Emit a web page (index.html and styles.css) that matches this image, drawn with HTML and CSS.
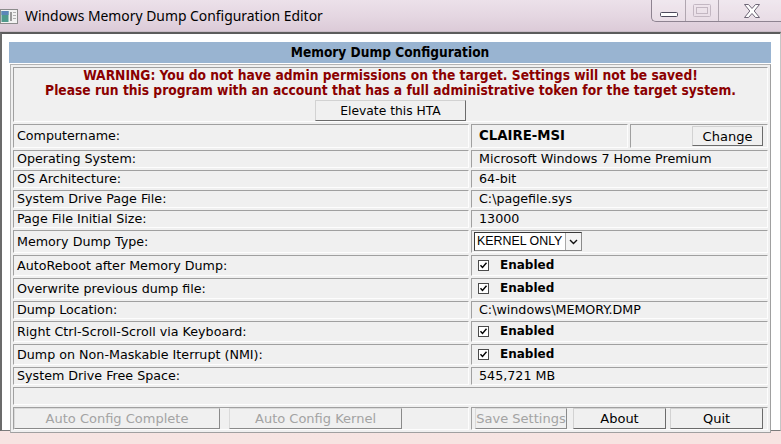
FILE: index.html
```html
<!DOCTYPE html>
<html lang="en">
<head>
  <meta charset="UTF-8" />
  <title>Windows Memory Dump Configuration Editor</title>
  <link rel="stylesheet" href="styles.css">
</head>
<body>

<div class="titlebar">
  <svg class="app-icon" width="18" height="15" viewBox="0 0 18 15">
    <rect x="0.5" y="0.5" width="17" height="14" fill="#f2f2f2" stroke="#8c8c8c"/>
    <rect x="1.5" y="2" width="7" height="11" fill="#4f9a8c"/>
    <rect x="1.5" y="2" width="7" height="4" fill="#5c86b8"/>
    <rect x="10" y="3" width="2" height="9" fill="#9a9a9a"/>
    <rect x="13" y="3" width="3" height="1" fill="#b0b0b0"/>
    <rect x="13" y="6" width="3" height="1" fill="#b0b0b0"/>
    <rect x="13" y="9" width="3" height="1" fill="#b0b0b0"/>
  </svg>
  <span class="title">Windows Memory Dump Configuration Editor</span>
  <div class="caps">
    <span class="cap cap-min">
      <svg width="18" height="5" viewBox="0 0 18 5"><rect x="0.5" y="0.5" width="17" height="4" rx="1" fill="#fff" stroke="#4d4a5c"/></svg>
    </span>
    <span class="cap cap-max">
      <svg width="18" height="13" viewBox="0 0 18 13"><rect x="0.5" y="0.5" width="17" height="12" rx="1" fill="none" stroke="#c3b7c2"/><rect x="3.5" y="3.5" width="11" height="6" fill="none" stroke="#c3b7c2"/></svg>
    </span>
    <span class="cap cap-close">
      <svg width="16" height="14" viewBox="0 0 16 14"><polygon points="0.5,0.5 4.5,0.5 8,4.5 11.5,0.5 15.5,0.5 10.2,7 15.5,13.5 11.5,13.5 8,9.5 4.5,13.5 0.5,13.5 5.8,7" fill="#fff" stroke="#6e6676"/></svg>
    </span>
  </div>
</div>

<div class="client">
  <div class="heading">Memory Dump Configuration</div>
  <table class="cfg">
    <colgroup>
      <col class="c-label">
      <col class="c-val">
      <col class="c-act">
    </colgroup>
    <tr>
      <td colspan="3" class="warn">
        <div>WARNING: You do not have admin permissions on the target. Settings will not be saved!</div>
        <div>Please run this program with an account that has a full administrative token for the target system.</div>
        <button type="button" class="btn elevate">Elevate this HTA</button>
      </td>
    </tr>
    <tr class="row-name">
      <td>Computername:</td>
      <td class="val"><b class="host">CLAIRE-MSI</b></td>
      <td class="act"><button type="button" class="btn change">Change</button></td>
    </tr>
    <tr>
      <td>Operating System:</td>
      <td class="val" colspan="2">Microsoft Windows 7 Home Premium</td>
    </tr>
    <tr>
      <td>OS Architecture:</td>
      <td class="val" colspan="2">64-bit</td>
    </tr>
    <tr>
      <td>System Drive Page File:</td>
      <td class="val" colspan="2">C:\pagefile.sys</td>
    </tr>
    <tr>
      <td>Page File Initial Size:</td>
      <td class="val" colspan="2">13000</td>
    </tr>
    <tr class="row-pick">
      <td>Memory Dump Type:</td>
      <td class="val pick-cell" colspan="2">
        <span class="pick">
          <span class="pick-text">KERNEL ONLY</span>
          <span class="pick-arrow"><svg width="9" height="6" viewBox="0 0 9 6"><path d="M1 1 L4.5 4.5 L8 1" fill="none" stroke="#111" stroke-width="1.4"/></svg></span>
        </span>
      </td>
    </tr>
    <tr class="row-check">
      <td>AutoReboot after Memory Dump:</td>
      <td class="val check-cell" colspan="2"><span class="check"><svg class="tick" width="11" height="11" viewBox="0 0 11 11"><rect x="0.5" y="0.5" width="10" height="10" fill="#fff" stroke="#4a4a4a"/><path d="M2.5 5.3 L4.5 7.5 L8.5 2.8" fill="none" stroke="#000" stroke-width="1.4"/></svg><b>Enabled</b></span></td>
    </tr>
    <tr class="row-check">
      <td>Overwrite previous dump file:</td>
      <td class="val check-cell" colspan="2"><span class="check"><svg class="tick" width="11" height="11" viewBox="0 0 11 11"><rect x="0.5" y="0.5" width="10" height="10" fill="#fff" stroke="#4a4a4a"/><path d="M2.5 5.3 L4.5 7.5 L8.5 2.8" fill="none" stroke="#000" stroke-width="1.4"/></svg><b>Enabled</b></span></td>
    </tr>
    <tr>
      <td>Dump Location:</td>
      <td class="val" colspan="2">C:\windows\MEMORY.DMP</td>
    </tr>
    <tr class="row-check">
      <td>Right Ctrl-Scroll-Scroll via Keyboard:</td>
      <td class="val check-cell" colspan="2"><span class="check"><svg class="tick" width="11" height="11" viewBox="0 0 11 11"><rect x="0.5" y="0.5" width="10" height="10" fill="#fff" stroke="#4a4a4a"/><path d="M2.5 5.3 L4.5 7.5 L8.5 2.8" fill="none" stroke="#000" stroke-width="1.4"/></svg><b>Enabled</b></span></td>
    </tr>
    <tr class="row-check">
      <td>Dump on Non-Maskable Iterrupt (NMI):</td>
      <td class="val check-cell" colspan="2"><span class="check"><svg class="tick" width="11" height="11" viewBox="0 0 11 11"><rect x="0.5" y="0.5" width="10" height="10" fill="#fff" stroke="#4a4a4a"/><path d="M2.5 5.3 L4.5 7.5 L8.5 2.8" fill="none" stroke="#000" stroke-width="1.4"/></svg><b>Enabled</b></span></td>
    </tr>
    <tr>
      <td>System Drive Free Space:</td>
      <td class="val" colspan="2">545,721 MB</td>
    </tr>
    <tr>
      <td colspan="3">&nbsp;</td>
    </tr>
    <tr class="row-btns">
      <td class="btns-left">
        <button type="button" class="btn wide" disabled>Auto Config Complete</button><button type="button" class="btn kernel" disabled>Auto Config Kernel</button>
      </td>
      <td class="btns-right" colspan="2">
        <button type="button" class="btn save" disabled>Save Settings</button><button type="button" class="btn about">About</button><button type="button" class="btn quit">Quit</button>
      </td>
    </tr>
  </table>
</div>

</body>
</html>
```

FILE: styles.css
```css
html, body {
  margin: 0;
}
body {
  width: 781px;
  height: 444px;
  overflow: hidden;
  font-family: "DejaVu Sans", Verdana, sans-serif;
  font-size: 12.7px;
  color: #000;
  background: linear-gradient(180deg, #f3dedd 0%, #f7e4e2 100%);
}

/* title bar */
.titlebar {
  height: 31px;
  display: flex;
  align-items: center;
  background: linear-gradient(180deg, #ece1ea 0%, #e4d6e1 55%, #dccbd8 100%);
  border-bottom: 1px solid #c9bcc6;
}
.app-icon {
  flex: none;
  margin-top: 1px;
}
.title {
  margin-left: 7px;
  font-family: "Noto Sans", "Open Sans", sans-serif;
  font-size: 13.9px;
  color: #000;
}
.caps {
  display: flex;
  align-self: flex-start;
  margin-left: auto;
  height: 21px;
  border: 1px solid #8e8391;
  border-top: 0;
  border-right: 0;
  border-radius: 0 0 0 5px;
  background: rgba(255, 255, 255, 0.22);
}
.cap {
  display: flex;
  justify-content: center;
  align-items: center;
}
.cap + .cap {
  border-left: 1px solid #b0a6b0;
}
.cap-min {
  width: 33px;
  padding-top: 8px;
  box-sizing: border-box;
}
.cap-max {
  width: 32px;
}
.cap-close {
  width: 58px;
  padding-left: 4px;
}

/* window body */
.client {
  height: 399px;
  box-sizing: border-box;
  padding: 8px 0 0 7px;
  background: #fff;
  border-top: 2px solid #5c5c5c;
  border-left: 2px solid #6b6b6b;
  border-right: 1px solid #c6c6c6;
  border-bottom: 1px solid #7c7c7c;
}
.heading {
  width: 762px;
  height: 21px;
  line-height: 21px;
  text-align: center;
  background: #99b4d1;
  font-family: "DejaVu Sans Condensed", "DejaVu Sans", sans-serif;
  font-stretch: condensed;
  font-weight: bold;
  font-size: 13.6px;
}
.cfg {
  margin: 1px 0 0 1px;
  width: 761px;
  table-layout: fixed;
  border-collapse: separate;
  border-spacing: 2px;
  background: #f0f0f0;
  border: 1px solid;
  border-color: #b4b4b4 #a0a0a0 #a0a0a0 #b4b4b4;
}
.c-label { width: 456px; }
.c-val { width: 157px; }
.c-act { width: 138px; }
.cfg td {
  padding: 0 0 0 3px;
  height: 16px;
  line-height: 16px;
  white-space: nowrap;
  vertical-align: middle;
  border: 1px solid;
  border-color: #a0a0a0 #fdfdfd #fdfdfd #a0a0a0;
}
.cfg td.val {
  padding-left: 7px;
}
.cfg b {
  font-weight: bold;
  font-size: 12px;
}
.cfg b.host {
  font-size: 13.3px;
}

/* warning */
.cfg td.warn {
  height: auto;
  padding: 0;
  line-height: 15px;
  text-align: center;
  color: #8b0000;
  font-family: "DejaVu Sans Condensed", "DejaVu Sans", sans-serif;
  font-stretch: condensed;
  font-weight: bold;
  font-size: 13.7px;
}

/* buttons */
.btn {
  height: 21px;
  padding: 0;
  margin: 0;
  font-family: "DejaVu Sans", sans-serif;
  font-size: 13px;
  color: #000;
  background: #f0f0f0;
  border: 1px solid;
  border-color: #d2d2d2 #6b6b6b #6b6b6b #d2d2d2;
  vertical-align: top;
}
.btn:disabled {
  color: #a3a3a3;
  border-color: #dadada #8a8a8a #8a8a8a #dadada;
}
.btn.elevate {
  display: block;
  width: 151px;
  margin: 2px auto 0;
  font-size: 12.3px;
  font-weight: normal;
  color: #000;
}
.cfg td.act {
  padding: 1px 4px 1px 0;
  text-align: right;
}
.btn.change {
  width: 71px;
  height: 20px;
}

/* select */
.cfg td.pick-cell {
  padding: 1px 0 1px 2px;
}
.pick {
  display: inline-flex;
  align-items: stretch;
  width: 108px;
  height: 19px;
  box-sizing: border-box;
  background: #fff;
  border: 1px solid;
  border-color: #3a3a3a #8a8a8a #8a8a8a #3a3a3a;
  vertical-align: middle;
}
.pick-text {
  flex: 1;
  padding-left: 2px;
  line-height: 17px;
  font-family: "Liberation Sans", Arial, sans-serif;
  font-size: 12.4px;
}
.pick-arrow {
  width: 15px;
  display: flex;
  align-items: center;
  justify-content: center;
  background: #f4f4f4;
  border-left: 1px solid #a8a8a8;
}

/* checkbox rows */
.cfg td.check-cell {
  padding-left: 6px;
  height: 19px;
  line-height: 19px;
}
.check {
  display: flex;
  align-items: center;
  height: 19px;
}
.tick {
  flex: none;
  margin-right: 11px;
}

/* bottom buttons */
.cfg td.btns-left {
  padding: 0;
  height: 21px;
}
.cfg td.btns-right {
  padding: 0 0 0 3px;
  height: 21px;
}
.btn.wide { width: 206px; }
.btn.kernel { width: 173px; margin-left: 9px; }
.btn.save { width: 92px; }
.btn.about { width: 93px; margin-left: 6px; }
.btn.quit { width: 93px; margin-left: 4px; }
```
